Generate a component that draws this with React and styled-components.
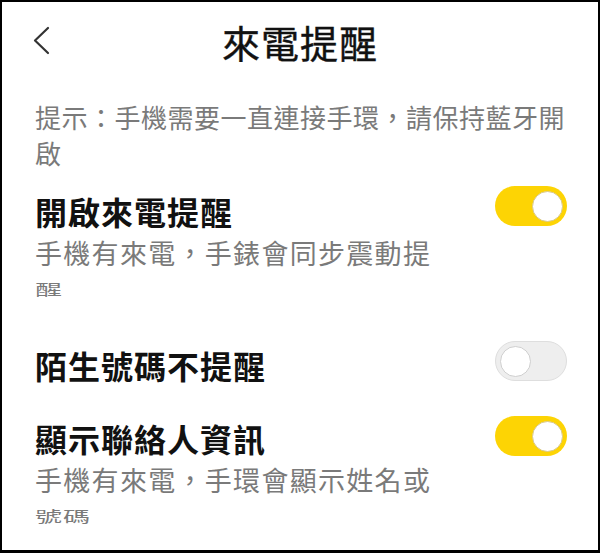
import React from "react";
import styled, { createGlobalStyle } from "styled-components";

const Global = createGlobalStyle`
  html, body { margin: 0; padding: 0; background: #000; }
  body { font-family: "Noto Sans CJK TC", "Noto Sans", sans-serif; }
`;

const Frame = styled.div`
  box-sizing: border-box;
  width: 600px;
  height: 553px;
  background: #fff;
  border-style: solid;
  border-color: #000;
  border-width: 2px 2px 3px 2px;
  overflow: hidden;
  display: flex;
  flex-direction: column;
`;

const Header = styled.header`
  height: 80px;
  display: grid;
  grid-template-columns: 1fr auto 1fr;
  align-items: center;
  padding: 0 31px;
`;

const BackButton = styled.button`
  justify-self: start;
  background: none;
  border: none;
  padding: 0;
  width: 18px;
  height: 30px;
  display: flex;
  align-items: center;
  margin-top: -2px;
`;

const Title = styled.h1`
  margin: 0;
  font-size: 38px;
  line-height: 44px;
  font-weight: 400;
  color: #111;
  letter-spacing: 1px;
  -webkit-text-stroke: 0.4px #111;
`;

const Content = styled.main`
  padding: 0 31px 0 33px;
  display: flex;
  flex-direction: column;
`;

const Hint = styled.p`
  margin: 17px 0 0;
  font-size: 26px;
  line-height: 36px;
  color: #7a7a7a;
  letter-spacing: 0.5px;
`;

const Row = styled.section`
  display: flex;
  align-items: flex-start;
  gap: 20px;
  margin-top: ${(p) => p.$gap}px;
`;

const TextCol = styled.div`
  flex: 1;
  display: flex;
  flex-direction: column;
`;

const Label = styled.div`
  font-size: 32px;
  line-height: 44px;
  font-weight: 700;
  color: #111;
  letter-spacing: 1px;
`;

const Desc = styled.div`
  font-size: 27px;
  line-height: 38px;
  color: #7a7a7a;
  letter-spacing: 1.3px;
  margin-top: 1px;
  white-space: nowrap;
`;

const SqueezeBox = styled.div`
  height: 16px;
  margin-top: 9px;
  overflow: visible;
`;

const Squeezed = styled.div`
  font-size: 27px;
  line-height: 27px;
  color: #7a7a7a;
  letter-spacing: 1px;
  transform: scaleY(0.55);
  transform-origin: top left;
`;

const Track = styled.div`
  flex: none;
  box-sizing: border-box;
  width: 72px;
  height: 40px;
  border-radius: 20px;
  margin-top: ${(p) => p.$offset}px;
  display: flex;
  align-items: center;
  justify-content: ${(p) => (p.$on ? "flex-end" : "flex-start")};
  padding: 0 4px;
  background: ${(p) => (p.$on ? "#fdd404" : "#eeeeee")};
  border: ${(p) => (p.$on ? "none" : "1px solid #dedede")};
`;

const Knob = styled.div`
  box-sizing: border-box;
  width: 31px;
  height: 31px;
  border-radius: 50%;
  background: #fff;
  border: 1.5px solid ${(p) => (p.$on ? "#d9c98a" : "#cfcfcf")};
`;

function Toggle({ on, offset = 0 }) {
  return (
    <Track $on={on} $offset={offset}>
      <Knob $on={on} />
    </Track>
  );
}

export default function App() {
  return (
    <>
      <Global />
      <Frame>
        <Header>
          <BackButton aria-label="返回">
            <svg width="17" height="30" viewBox="0 0 17 30">
              <polyline
                points="15,2 2,14.5 15,27"
                fill="none"
                stroke="#333"
                strokeWidth="2.2"
                strokeLinecap="round"
                strokeLinejoin="round"
              />
            </svg>
          </BackButton>
          <Title>來電提醒</Title>
          <span />
        </Header>
        <Content>
          <Hint>提示：手機需要一直連接手環，請保持藍牙開啟</Hint>
          <Row $gap={18}>
            <TextCol>
              <Label>開啟來電提醒</Label>
              <Desc>手機有來電，手錶會同步震動提</Desc>
              <SqueezeBox>
                <Squeezed>醒</Squeezed>
              </SqueezeBox>
            </TextCol>
            <Toggle on offset={-3} />
          </Row>
          <Row $gap={46}>
            <TextCol>
              <Label>陌生號碼不提醒</Label>
            </TextCol>
            <Toggle on={false} offset={-2} />
          </Row>
          <Row $gap={29}>
            <TextCol>
              <Label>顯示聯絡人資訊</Label>
              <Desc>手機有來電，手環會顯示姓名或</Desc>
              <SqueezeBox>
                <Squeezed>號碼</Squeezed>
              </SqueezeBox>
            </TextCol>
            <Toggle on offset={0} />
          </Row>
        </Content>
      </Frame>
    </>
  );
}
